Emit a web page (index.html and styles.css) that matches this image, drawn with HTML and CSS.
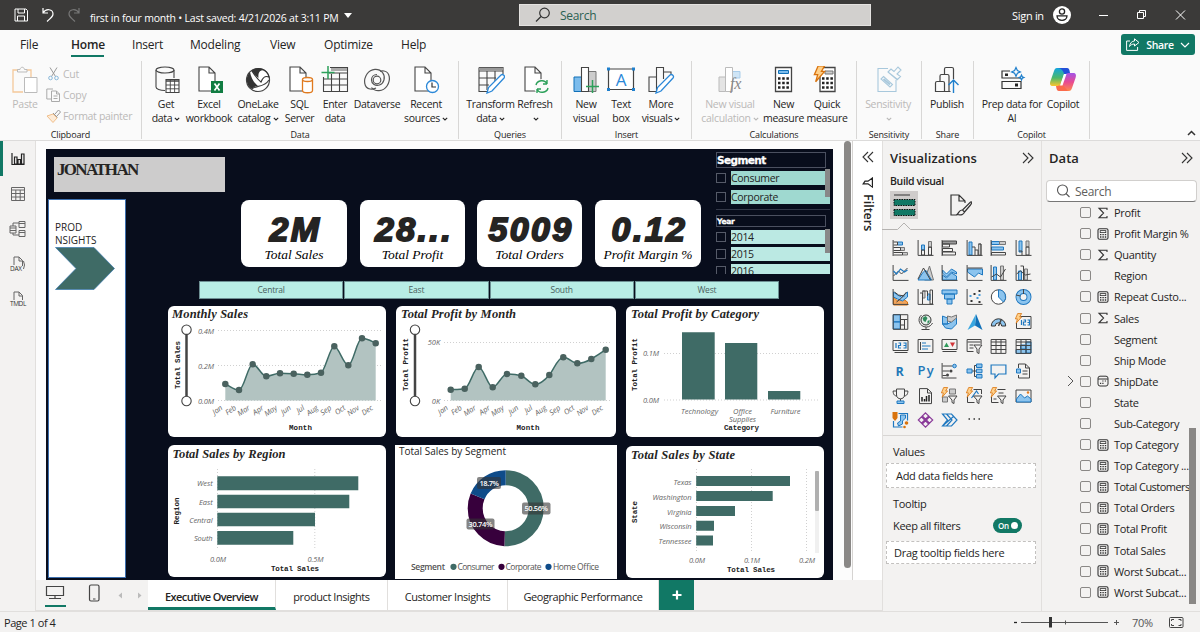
FILE: index.html
```
<!DOCTYPE html>
<html lang="en">

<head>
    <meta charset="UTF-8">
    <meta name="viewport" content="width=device-width, initial-scale=1.0">
    <title>first in four month</title>
    <link rel="stylesheet" href="styles.css">
</head>

<body>
    <!-- Shared icons -->
    <svg class="defs" width="0" height="0">
        <defs>
            <symbol id="calc" viewBox="0 0 12 12"><rect x="1" y=".7" width="10" height="10.6" rx="1.5" fill="none" stroke="#333" stroke-width="1.1"/><rect x="3.2" y="2.6" width="5.6" height="2" fill="none" stroke="#333" stroke-width=".8"/><path d="M3 6.7h1.4M5.4 6.7h1.4M7.8 6.7h1.4M3 9h1.4M5.4 9h1.4M7.8 9h1.4" stroke="#333" stroke-width="1.3"/></symbol>
            <symbol id="sigma" viewBox="0 0 12 12"><path d="M10 3V1.2H2L6.6 6 2 10.8h8V9" fill="none" stroke="#333" stroke-width="1.1"/></symbol>
            <symbol id="date" viewBox="0 0 12 12"><rect x="1" y="1.2" width="10" height="9.8" rx="2" fill="none" stroke="#333"/><path d="M1 4h10" stroke="#333"/><path d="M5.3 6h1.2M7.8 6H9M3 8.400h1.200M5.300 8.400h1.200" stroke="#333" stroke-width="1.2"/></symbol>
            <symbol id="dbl" viewBox="0 0 12 12"><path d="M1 1l5 5-5 5M6 1l5 5-5 5" fill="none" stroke="#333" stroke-width="1.1"/></symbol>
            <symbol id="down" viewBox="0 0 6 6"><path d="M.8 1.800L3 4l2.200-2.200" fill="none" stroke="currentColor" stroke-width="1.1"/></symbol>
            <symbol id="page" viewBox="0 0 28 28"><path d="M3 1h10l6 6v18H3zM13 1v6h6" fill="#fff" stroke="#444" stroke-width="1.1"/></symbol>
            <symbol id="bolt" viewBox="0 0 10 14"><path d="M4 .6h5L6.500 5H9L2 13l1.600-5.500H1z" fill="#ffd08a" stroke="#d9730d"/></symbol>
        </defs>
    </svg>

    <header class="titlebar">
        <svg class="tb-icons" width="70" height="16" viewBox="0 0 70 16" fill="none" stroke="#fff">
            <path d="M1 2h11l1.500 1.500V14H1zM4 2v4h6.500V2M3.500 14V9h7v5" />
            <path d="M29 1v5h5M29 6c3-5 10-4 10 1 0 2-1 3-6 7.500" stroke-width="1.200" />
            <path d="M65 1v5h-5M65 6c-3-5-10-4-10 1 0 2 1 3 6 7.500" stroke="#777" stroke-width="1.200" />
        </svg>
        <span class="file-name">first in four month • Last saved: 4/21/2026 at 3:11 PM</span>
        <span class="caret"></span>
        <div class="top-search">
            <svg width="16" height="16" viewBox="0 0 16 16" fill="none" stroke="#333" stroke-width="1.200"><circle cx="9.500" cy="6" r="4.800" /><path d="M6 9.500L1 14.500" /></svg>
            <span>Search</span>
        </div>
        <span class="sign-in">Sign in</span>
        <svg class="avatar" width="18" height="18" viewBox="0 0 18 18"><circle cx="9" cy="9" r="9" fill="#fff" /><circle cx="9" cy="5.500" r="2.600" fill="none" stroke="#222" stroke-width="1.300" /><path d="M4 9.800h10c0 6-10 6-10 0z" fill="none" stroke="#222" stroke-width="1.300" /></svg>
        <svg class="win-buttons" width="88" height="12" viewBox="0 0 88 12" fill="none" stroke="#fff"><path d="M0 6.500h9M38.500 3.500h6v6h-6zM40.500 3.500v-2h6v6h-2M77 1.500l9 9M86 1.500l-9 9" /></svg>
    </header>

    <nav class="menu">
        <a class="m-file">File</a>
        <a class="m-home active">Home</a>
        <a class="m-insert">Insert</a>
        <a class="m-modeling">Modeling</a>
        <a class="m-view">View</a>
        <a class="m-optimize">Optimize</a>
        <a class="m-help">Help</a>
        <button class="share">
            <svg width="14" height="13" viewBox="0 0 14 13" fill="none" stroke="#fff"><path d="M4 3H.6v9.400h11V9M8.500.8L13 4.500 8.500 8V6C6 6 4.500 7 3.500 8.500 4 5 6 3 8.500 3z" /></svg>
            Share
            <svg width="10" height="10" viewBox="0 0 10 10" fill="none" stroke="#fff" stroke-width="1.200"><path d="M1 3l4 4 4-4" /></svg>
        </button>
    </nav>

    <section class="ribbon">
        <div class="group g-clipboard">
            <div class="tools">
                <div class="tool t-paste off">
                    <svg width="28" height="28" viewBox="0 0 28 28" fill="none"><path d="M7 4H2v22h10M20 12V4h-4" stroke="#f5c99b" stroke-width="1.300" /><path d="M6.500 6V3.500H9c.5-3 4-3 4.500 0H16V6z" stroke="#bbb" /><path d="M13.500 11.500H26v15H13.500z" fill="#fff" stroke="#bbb" /></svg>
                    <span>Paste</span>
                </div>
                <div class="clip-list">
                    <div><svg width="15" height="14" viewBox="0 0 15 14" fill="none"><path d="M4 .5l5.500 9M11 .5L5.500 9.500" stroke="#999" /><circle cx="4.500" cy="11" r="1.800" stroke="#8ab8da" /><circle cx="10.500" cy="11" r="1.800" stroke="#8ab8da" /></svg>Cut</div>
                    <div><svg width="15" height="14" viewBox="0 0 15 14" fill="none" stroke="#aaa"><path d="M5 11H.8V1H7M5.500 3h5l3 3v7.500h-8zM10.500 3v3h3M7.500 8h4M7.500 10.500h4" /></svg>Copy</div>
                    <div><svg width="15" height="14" viewBox="0 0 15 14" fill="none"><path d="M1 7l6-2 4 4-4 4.500z" fill="#fdebd7" stroke="#f0bf8c" /><path d="M7 4l4.500 4.500M9 5l3.500-4 2 2L11 7" stroke="#999" /></svg>Format painter</div>
                </div>
            </div>
            <p>Clipboard</p>
        </div>

        <div class="group g-data">
            <div class="tools">
                <div class="tool w36">
                    <svg width="28" height="28" viewBox="0 0 28 28" fill="none" stroke="#444" stroke-width="1.100"><path d="M4 4v17c0 2 4 3.500 9 3.500M22 4v8" /><ellipse cx="13" cy="4" rx="9" ry="3" /><path d="M14 13.500h13v13H14z" fill="#fff" /><path d="M14 15h13" stroke-width="1.500" /><path d="M14 19h13M14 22.800h13M18.300 14v12M22.600 14v12" stroke-width=".9" /></svg>
                    <span>Get<br>data<svg class="dn"><use href="#down" /></svg></span>
                </div>
                <div class="tool w50">
                    <svg width="28" height="28" viewBox="0 0 28 28"><use href="#page" x="1" /><path d="M16 15h12v12H16z" fill="#107c41" /><path d="M19.500 17.500l5 7M24.500 17.500l-5 7" stroke="#fff" stroke-width="1.700" /></svg>
                    <span>Excel<br>workbook</span>
                </div>
                <div class="tool w48">
                    <svg width="28" height="28" viewBox="0 0 28 28"><circle cx="14" cy="14" r="11.500" fill="#fff" stroke="#444" stroke-width="1.200" /><path d="M8 5c6-5 15-2 17 6-4-1.500-6 0-8 5C13 13 10 8 8 5z" fill="#fff" stroke="#333" stroke-width="1.200" /><path d="M8 5c4-3.500 9-3 12-1-5 0-6 4-5.500 8C12 10 10 8 8 5zM6 6c-5 5-4 14 2 17 2-2 3-3 6-3-4-3-7-8-8-14z" fill="#333" /><path d="M8 23c4-4 12-1 17-9" fill="none" stroke="#444" stroke-width="1.200" /></svg>
                    <span>OneLake<br>catalog<svg class="dn"><use href="#down" /></svg></span>
                </div>
                <div class="tool w35">
                    <svg width="28" height="28" viewBox="0 0 28 28"><use href="#page" x="1" /><path d="M16.500 13.500v11c0 3 10 3 10 0v-11" fill="#fff" stroke="#e07a1f" stroke-width="1.300" /><ellipse cx="21.500" cy="13.500" rx="5" ry="2" fill="#fff" stroke="#e07a1f" stroke-width="1.300" /></svg>
                    <span>SQL<br>Server</span>
                </div>
                <div class="tool w36">
                    <svg width="28" height="28" viewBox="0 0 28 28" fill="none" stroke="#444" stroke-width="1.100"><path d="M2.500 11v14.500h24V1.500H9M26 7H8M26 13H3M26 19H3M10.500 8v17M18.500 7v18" /><path d="M10 3.500h16" stroke="#aaa" stroke-width="3" /><path d="M7 0v13M.5 6.500h13" stroke="#2ca05a" stroke-width="1.500" /></svg>
                    <span>Enter<br>data</span>
                </div>
                <div class="tool w48">
                    <svg width="28" height="28" viewBox="0 0 28 28" fill="none" stroke="#555" stroke-width="1.200"><circle cx="14" cy="14" r="3.800" /><path d="M7 23C1 22 0 14 4 8 8 2 16 2 19.500 6.500c3.500 4.500 1.500 11-3 12.500-4 1.300-8-1-8-5 0-3 2-5.500 5.500-5.500" /><path d="M21 5c6 1 7 9 3 15-4 6-12 6-15.500 1.500" /><path d="M7 23c3 .5 5-.5 6-1M21 5c-2-.3-3 0-4 .3" /></svg>
                    <span>Dataverse</span>
                </div>
                <div class="tool w50">
                    <svg width="28" height="28" viewBox="0 0 28 28"><use href="#page" /><circle cx="20.500" cy="20.500" r="6" fill="#fff" stroke="#2b88d8" stroke-width="1.300" /><path d="M20 16.500v4.500h4" fill="none" stroke="#333" stroke-width="1.200" /></svg>
                    <span>Recent<br>sources<svg class="dn"><use href="#down" /></svg></span>
                </div>
            </div>
            <p>Data</p>
        </div>

        <div class="group g-queries">
            <div class="tools">
                <div class="tool w53">
                    <svg width="28" height="28" viewBox="0 0 28 28" fill="none" stroke="#444" stroke-width="1.100"><path d="M2 1.500h24V8M2 1.500v24h8M2 5h24M2 12h17M2 19h10M10 5v19M18 5v10" /><path d="M2 3h24" stroke="#999" stroke-width="2.500" /><path d="M10 27l1.500-5.500L24 9c2-1.500 4.500 1 3 3L15 25z" fill="#fff" stroke="#2b88d8" stroke-width="1.300" /></svg>
                    <span>Transform<br>data<svg class="dn"><use href="#down" /></svg></span>
                </div>
                <div class="tool w36">
                    <svg width="28" height="28" viewBox="0 0 28 28"><use href="#page" x="1" /><circle cx="21" cy="21" r="8" fill="#fafafa" /><path d="M15 19c1-5 9-6 11-1v-4M26 18h-4M27 22c-1 5-9 6-11 1v4M16 23h4" fill="none" stroke="#2ca05a" stroke-width="1.400" /></svg>
                    <span>Refresh<br><svg class="dn"><use href="#down" /></svg></span>
                </div>
            </div>
            <p>Queries</p>
        </div>

        <div class="group g-insert">
            <div class="tools">
                <div class="tool w34">
                    <svg width="28" height="28" viewBox="0 0 28 28"><path d="M16 5.500h8v20h-8z" fill="#ccc" stroke="#777" /><path d="M2 11h7.500v14.500H2z" fill="#7cbcec" stroke="#1070b8" /><path d="M9.500 1.500h7v24h-7z" fill="#fff" stroke="#444" stroke-width="1.100" /><path d="M20.500 14v13M14 20.500h13" stroke="#2ca05a" stroke-width="1.500" /></svg>
                    <span>New<br>visual</span>
                </div>
                <div class="tool w36">
                    <svg width="28" height="28" viewBox="0 0 28 28"><path d="M1.500 3h25v20.500h-25z" fill="#fff" stroke="#444" stroke-width="1.200" /><path d="M0 1.500h3v3H0zM25 1.500h3v3h-3zM0 22h3v3H0zM25 22h3v3h-3z" fill="#1f7fcc" /><text x="14" y="19.500" font-size="17" text-anchor="middle" fill="#2b88d8">A</text></svg>
                    <span>Text<br>box</span>
                </div>
                <div class="tool w44">
                    <svg width="28" height="28" viewBox="0 0 28 28" fill="none" stroke="#444" stroke-width="1.100"><path d="M9 25.500H2V11h7M9.500 25V1.500h7V13M16.500 6H24v4" /><path d="M9 27l1.500-5.500L23 9c2-1.500 4.500 1 3 3L14 25z" fill="#fff" stroke="#2b88d8" stroke-width="1.300" /></svg>
                    <span>More<br>visuals<svg class="dn"><use href="#down" /></svg></span>
                </div>
            </div>
            <p>Insert</p>
        </div>

        <div class="group g-calc">
            <div class="tools">
                <div class="tool w60 off">
                    <svg width="28" height="28" viewBox="0 0 28 28"><path d="M3 11h6.500v14.500H3z" fill="#e4e4e4" stroke="#bbb" /><path d="M16 5.500h8V12h-8z" fill="#cfe5f6" stroke="#a9cdea" /><path d="M9.500 1.500h7v24h-7z" fill="#fff" stroke="#bbb" /><text class="fx" x="14" y="22.500" font-size="16" fill="#888">fx</text></svg>
                    <span>New visual<br>calculation<svg class="dn"><use href="#down" /></svg></span>
                </div>
                <div class="tool w47">
                    <svg width="28" height="28" viewBox="0 0 28 28"><path d="M5.500 1.500h16v24h-16z" fill="#fff" stroke="#444" stroke-width="1.300" /><path d="M8.500 4.500h10v3h-10z" fill="#7cbcec" stroke="#1070b8" /><path d="M8 12.500h11M8 17h11M8 21.500h11" stroke="#222" stroke-width="2.500" stroke-dasharray="2.500 1.700" /></svg>
                    <span>New<br>measure</span>
                </div>
                <div class="tool w40">
                    <svg width="28" height="28" viewBox="0 0 28 28"><path d="M7 1.500h15v24H7z" fill="#fff" stroke="#444" stroke-width="1.300" /><path d="M12 5h8v3h-8z" fill="#ccc" stroke="#777" /><path d="M9 12.500h11M9 17h11M9 21.500h11" stroke="#222" stroke-width="2.500" stroke-dasharray="2.500 1.700" /><use href="#bolt" x="0" y="-1" width="13" height="18" /></svg>
                    <span>Quick<br>measure</span>
                </div>
            </div>
            <p>Calculations</p>
        </div>

        <div class="group g-sens">
            <div class="tools">
                <div class="tool w50 off">
                    <svg width="28" height="28" viewBox="0 0 28 28" fill="none" stroke="#a8c8dc" stroke-width="1.100"><path d="M14 2.500H4v23h18V14M9.500 10.500l9 8-2.500 2.500-9-8z" /><path d="M9.500 13l6.500 5.500" stroke-width="2" /><path d="M14 6l3-3 3 2.500L24 1l3 3-4 4 3.500 2.500-3 3zM14 6l9.500 8" /></svg>
                    <span>Sensitivity<br><svg class="dn"><use href="#down" /></svg></span>
                </div>
            </div>
            <p>Sensitivity</p>
        </div>

        <div class="group g-share">
            <div class="tools">
                <div class="tool w44">
                    <svg width="28" height="28" viewBox="0 0 28 28" fill="none" stroke="#444" stroke-width="1.200"><path d="M4 15.500h6q1.500 0 1.500 1.500v8.500h-9V17q0-1.500 1.500-1.500zM11.500 25.500h6M7 15.500V10q0-1.500 1.500-1.500h6q1.500 0 1.500 1.500v15M11.500 8.500V3q0-1.500 1.500-1.500h6q1.500 0 1.500 1.500v10" /><path d="M20.500 27V14.500M15.500 19l5-5 5 5" stroke="#1f7fcc" stroke-width="1.400" /></svg>
                    <span>Publish</span>
                </div>
            </div>
            <p>Share</p>
        </div>

        <div class="group g-copilot">
            <div class="tools">
                <div class="tool w64">
                    <svg width="28" height="28" viewBox="0 0 28 28" fill="none" stroke="#333" stroke-width="1.200"><path d="M12 5H4v7h19M4 15.500h19v7H4z" /><path d="M7 7.500h3v2.500H7zM17 17.500h3v3h-3z" fill="#222" stroke="none" /><path d="M18 1.500l1.400 3 3 1.400-3 1.400-1.400 3-1.400-3-3-1.400 3-1.400zM23.500 9l.8 1.800 1.700.7-1.700.8-.8 1.700-.8-1.700-1.700-.8 1.700-.7z" stroke="#1f7fcc" /></svg>
                    <span>Prep data for<br>AI</span>
                </div>
                <div class="tool w38">
                    <svg width="28" height="28" viewBox="0 0 28 28">
                        <defs>
                            <linearGradient id="cpa" x1="0" y1="0" x2="0" y2="1"><stop offset="0" stop-color="#12a5e0" /><stop offset=".55" stop-color="#4cb86a" /><stop offset="1" stop-color="#ffc52e" /></linearGradient>
                            <linearGradient id="cpb" x1="0" y1="0" x2="0" y2="1"><stop offset="0" stop-color="#a255e8" /><stop offset=".5" stop-color="#e84a92" /><stop offset="1" stop-color="#ff8a4c" /></linearGradient>
                        </defs>
                        <path d="M8 2h9l-5 16c-.5 2-2 2-4 2H4c-3 0-3.500-2-2.500-5L5 5c.6-2 1.500-3 3-3z" fill="url(#cpa)" />
                        <path d="M20 25h-9l5-16c.5-2 2-2 4-2h4c3 0 3.500 2 2.500 5L23 22c-.6 2-1.500 3-3 3z" fill="url(#cpb)" />
                        <path d="M9 2h9c2 0 2.500 1.500 3 5-2.500 0-4 0-5 3L15 8c-1-4-3-5.500-6-6z" fill="#2350d8" />
                        <path d="M19 25h-9c-2 0-2.500-1.500-3-5 2.500 0 4 0 5-3z" fill="#fb6a4c" />
                        <path d="M15 8h2.500l-4 11.500H11z" fill="#fff" />
                    </svg>
                    <span>Copilot</span>
                </div>
            </div>
            <p>Copilot</p>
        </div>
        <svg class="collapse" width="9" height="6" viewBox="0 0 9 6" fill="none" stroke="#333" stroke-width="1.500"><path d="M1 5l3.500-3.500L8 5" /></svg>
    </section>

    <main class="workspace">
        <aside class="rail">
            <div class="rail-item active"><svg width="16" height="16" viewBox="0 0 16 16" fill="none" stroke="#222" stroke-width="1.200"><path d="M2 2v11.500h12.500M4.500 6H7v7H4.500zM8 8.500h2.500V13H8zM11.500 3H14v10h-2.500z" /></svg></div>
            <div class="rail-item"><svg width="16" height="16" viewBox="0 0 16 16" fill="none" stroke="#666"><path d="M1.500 1.500h13v13h-13zM1.500 4h13M1.500 7.500h13M1.500 11h13M5.800 4v10.500M10.200 4v10.500" /></svg></div>
            <div class="rail-item"><svg width="17" height="18" viewBox="0 0 17 18" fill="none" stroke="#666"><path d="M1 6h6v7H1zM1 8h6M1 10.500h6M10 1.500h6v6h-6zM10 3.500h6M10 10.500h6v6h-6zM10 12.500h6M4 6V3h6M4 13v2h6" /></svg></div>
            <div class="rail-item"><svg width="18" height="18" viewBox="0 0 18 18" fill="none" stroke="#666"><path d="M5 10V2h5l3.500 3.500V11M10 2v4h3.500M14.500 6q2 4 0 8" /><text x="1" y="16" font-size="6.500" stroke="none" fill="#333">DAX</text></svg></div>
            <div class="rail-item"><svg width="18" height="18" viewBox="0 0 18 18" fill="none" stroke="#666"><path d="M5 10V2h5l3.500 3.500V10M10 2v4h3.500" /><text x="1" y="16" font-size="6.500" textLength="16" stroke="none" fill="#333">TMDL</text></svg></div>
        </aside>

        <div class="center">
            <div class="stage">
                <div class="report">
                    <div class="name-box">JONATHAN</div>

                    <div class="side-panel">
                        <p>PROD<br>NSIGHTS</p>
                        <svg width="60" height="43" viewBox="0 0 60 43"><path d="M.5.5H39l20.500 21L39 42.500H.5l20.500-21z" fill="#3f6b66" stroke="#3a7ab0" stroke-width=".7" /></svg>
                    </div>

                    <div class="kpis">
                        <div class="kpi"><b>2M</b><i>Total Sales</i></div>
                        <div class="kpi k2"><b>28...</b><i>Total Profit</i></div>
                        <div class="kpi k3"><b>5009</b><i>Total Orders</i></div>
                        <div class="kpi k4"><b>0.12</b><i>Profit Margin %</i></div>
                    </div>

                    <div class="slicers">
                        <div class="slicer segment">
                            <h4>Segment</h4>
                            <div class="opt"><span class="box"></span><span class="val">Consumer</span></div>
                            <div class="opt"><span class="box"></span><span class="val">Corporate</span></div>
                            <span class="thumb"></span>
                        </div>
                        <div class="slicer year">
                            <h4>Year</h4>
                            <div class="opt"><span class="box"></span><span class="val">2014</span></div>
                            <div class="opt"><span class="box"></span><span class="val">2015</span></div>
                            <div class="opt"><span class="box"></span><span class="val">2016</span></div>
                            <span class="thumb"></span>
                        </div>
                    </div>

                    <div class="visuals">
                        <div class="regions"><span>Central</span><span>East</span><span>South</span><span>West</span></div>
                        <div class="cards">
                            <!-- Monthly Sales -->
                            <div class="card">
                                <svg width="218" height="131" viewBox="168 306 218 131">
                                    <text class="title" x="172" y="318" textLength="76">Monthly Sales</text>
                                    <path class="grid" d="M218 330.500h164M218 365.500h164M218 400.500h164" />
                                    <path class="area" d="M225.300 384C230 386 234 390 239 390S248 364.300 252.700 364.300 261.500 376.300 266.300 376.300 275 373.300 280 373.300 289 373.500 293.700 373.700 302 374.700 307.300 374.700 317 374 321 372.700 330 346.300 334.300 346.300 343.500 365.300 348.300 365.300 357 338.300 362 338.300 371 341 375.700 343.300V400.500H225.300z" />
                                    <path class="line" d="M225.300 384C230 386 234 390 239 390S248 364.300 252.700 364.300 261.500 376.300 266.300 376.300 275 373.300 280 373.300 289 373.500 293.700 373.700 302 374.700 307.300 374.700 317 374 321 372.700 330 346.300 334.300 346.300 343.500 365.300 348.300 365.300 357 338.300 362 338.300 371 341 375.700 343.300" />
                                    <path class="dots" d="M225.300 384h0M239 390h0M252.700 364.300h0M266.300 376.300h0M280 373.300h0M293.700 373.700h0M307.300 374.700h0M321 372.700h0M334.300 346.300h0M348.300 365.300h0M362 338.300h0M375.700 343.300h0" />
                                    <path class="zoom" d="M186.500 330v71" /><circle class="knob" cx="186.500" cy="329.700" r="4.700" /><circle class="knob" cx="186.500" cy="401" r="4.700" />
                                    <g class="tick end"><text x="214" y="333.500">0.4M</text><text x="214" y="368.500">0.2M</text><text x="214" y="403.500">0.0M</text></g>
                                    <g class="tick end">
                                        <text transform="translate(223 409) rotate(-35)">Jan</text><text transform="translate(236.700 409) rotate(-35)">Feb</text><text transform="translate(250.400 409) rotate(-35)">Mar</text><text transform="translate(264 409) rotate(-35)">Apr</text><text transform="translate(277.700 409) rotate(-35)">May</text><text transform="translate(291.400 409) rotate(-35)">Jun</text><text transform="translate(305 409) rotate(-35)">Jul</text><text transform="translate(318.700 409) rotate(-35)">Aug</text><text transform="translate(332 409) rotate(-35)">Sep</text><text transform="translate(346 409) rotate(-35)">Oct</text><text transform="translate(359.700 409) rotate(-35)">Nov</text><text transform="translate(373.400 409) rotate(-35)">Dec</text>
                                    </g>
                                    <text class="axis" x="289" y="430" textLength="23">Month</text>
                                    <text class="axis" transform="translate(180 389) rotate(-90)" textLength="48">Total Sales</text>
                                </svg>
                            </div>

                            <!-- Total Profit by Month -->
                            <div class="card">
                                <svg width="220" height="131" viewBox="396 306 220 131">
                                    <text class="title" x="401" y="318" textLength="115">Total Profit by Month</text>
                                    <path class="grid" d="M444 342.500h168M444 400.500h168" />
                                    <path class="area" d="M450.700 389.700C455 389.500 460 389.500 464.700 388.700S474 367 478.700 367 488 387.300 492.700 387.300 502 374 507 374 517 374.500 521.300 375.700 530 384.300 535.300 384.300 545 380 549.300 375 558 357.300 563.300 357.300 572.500 363.300 577.300 363.300 587 361.500 591.300 359 601 353 605.700 349.700V400.500H450.700z" />
                                    <path class="line" d="M450.700 389.700C455 389.500 460 389.500 464.700 388.700S474 367 478.700 367 488 387.300 492.700 387.300 502 374 507 374 517 374.500 521.300 375.700 530 384.300 535.300 384.300 545 380 549.300 375 558 357.300 563.300 357.300 572.500 363.300 577.300 363.300 587 361.500 591.300 359 601 353 605.700 349.700" />
                                    <path class="dots" d="M450.700 389.700h0M464.700 388.700h0M478.700 367h0M492.700 387.300h0M507 374h0M521.300 375.700h0M535.300 384.300h0M549.300 375h0M563.300 357.300h0M577.300 363.300h0M591.300 359h0M605.700 349.700h0" />
                                    <path class="zoom" d="M415 330v71" /><circle class="knob" cx="415" cy="329.700" r="4.700" /><circle class="knob" cx="415" cy="401" r="4.700" />
                                    <g class="tick end"><text x="440" y="345">50K</text><text x="440" y="403.500">0K</text></g>
                                    <g class="tick end">
                                        <text transform="translate(448.500 409) rotate(-35)">Jan</text><text transform="translate(462.500 409) rotate(-35)">Feb</text><text transform="translate(476.500 409) rotate(-35)">Mar</text><text transform="translate(490.500 409) rotate(-35)">Apr</text><text transform="translate(504.500 409) rotate(-35)">May</text><text transform="translate(519 409) rotate(-35)">Jun</text><text transform="translate(533 409) rotate(-35)">Jul</text><text transform="translate(547 409) rotate(-35)">Aug</text><text transform="translate(561 409) rotate(-35)">Sep</text><text transform="translate(575 409) rotate(-35)">Oct</text><text transform="translate(589 409) rotate(-35)">Nov</text><text transform="translate(603.500 409) rotate(-35)">Dec</text>
                                    </g>
                                    <text class="axis" x="516.500" y="430" textLength="23">Month</text>
                                    <text class="axis" transform="translate(408 391) rotate(-90)" textLength="53">Total Profit</text>
                                </svg>
                            </div>

                            <!-- Total Profit by Category -->
                            <div class="card">
                                <svg width="198" height="131" viewBox="626 306 198 131">
                                    <text class="title" x="631" y="318" textLength="128">Total Profit by Category</text>
                                    <path class="grid" d="M664 353.500h156M664 400h156" />
                                    <path class="bar" d="M682 332.300h32.700v67.200H682zM725 343h32.300v56.500H725zM768 391h32.300v8.500H768z" />
                                    <g class="tick end"><text x="659" y="356">0.1M</text><text x="659" y="402.500">0.0M</text></g>
                                    <g class="tick"><text x="681" y="414" textLength="37">Technology</text><text x="733" y="414" textLength="19">Office</text><text x="729" y="422" textLength="27">Supplies</text><text x="770.500" y="414" textLength="30">Furniture</text></g>
                                    <text class="axis" x="724" y="430" textLength="35">Category</text>
                                    <text class="axis" transform="translate(637 391) rotate(-90)" textLength="53">Total Profit</text>
                                </svg>
                            </div>

                            <!-- Total Sales by Region -->
                            <div class="card">
                                <svg width="218" height="132" viewBox="168 445 218 132">
                                    <text class="title" x="172.500" y="458" textLength="113">Total Sales by Region</text>
                                    <path class="grid" d="M217.500 469v80M314.800 469v80" />
                                    <path class="bar" d="M217.300 476.300h141v14h-141zM217.300 494.700h132v13.600h-132zM217.300 512.700H315v13.600h-97.700zM217.300 531h76v13.700h-76z" />
                                    <g class="tick end"><text x="212.500" y="486">West</text><text x="212.500" y="504.500">East</text><text x="212.500" y="522.500">Central</text><text x="212.500" y="540.500">South</text></g>
                                    <g class="tick"><text x="210" y="562">0.0M</text><text x="307.500" y="562">0.5M</text></g>
                                    <text class="axis" x="271" y="571" textLength="48">Total Sales</text>
                                    <text class="axis" transform="translate(179 524.500) rotate(-90)" textLength="27">Region</text>
                                </svg>
                            </div>

                            <!-- Total Sales by Segment -->
                            <div class="card square">
                                <svg width="222" height="134" viewBox="395 445 222 134">
                                    <text class="plain" x="399" y="454.500" textLength="107">Total Sales by Segment</text>
                                    <g transform="rotate(-90 505.700 508.200)" fill="none" stroke-width="15">
                                        <circle cx="505.700" cy="508.200" r="30.500" stroke="#3f6b66" pathLength="100" stroke-dasharray="50.560 100" />
                                        <circle cx="505.700" cy="508.200" r="30.500" stroke="#37003c" pathLength="100" stroke-dasharray="30.740 100" stroke-dashoffset="-50.560" />
                                        <circle cx="505.700" cy="508.200" r="30.500" stroke="#0f4c8a" pathLength="100" stroke-dasharray="18.700 100" stroke-dashoffset="-81.300" />
                                    </g>
                                    <g fill="#333" fill-opacity=".6"><rect x="522" y="502.500" width="28.500" height="12" rx="2" /><rect x="466.500" y="518.500" width="28" height="11" rx="2" /><rect x="477" y="477" width="24" height="12" rx="2" /></g>
                                    <g class="share-pct"><text x="524.500" y="511.200" textLength="23.500">50.56%</text><text x="468.500" y="526.700" textLength="24">30.74%</text><text x="479.500" y="485.700" textLength="19.500">18.7%</text></g>
                                    <circle cx="453.500" cy="566.800" r="3.100" fill="#3f6b66" /><circle cx="501.500" cy="566.800" r="3.100" fill="#37003c" /><circle cx="548.500" cy="566.800" r="3.100" fill="#0f4c8a" />
                                    <g class="legend"><text class="name" x="411" y="569.800" textLength="34">Segment</text><text x="457.500" y="569.800" textLength="37">Consumer</text><text x="505.500" y="569.800" textLength="36">Corporate</text><text x="553" y="569.800" textLength="46">Home Office</text></g>
                                </svg>
                            </div>

                            <!-- Total Sales by State -->
                            <div class="card">
                                <svg width="198" height="132" viewBox="626 446 198 132">
                                    <text class="title" x="631" y="459" textLength="104">Total Sales by State</text>
                                    <path class="grid" d="M696.500 469v83M751.500 469v83M806.500 469v83" />
                                    <path class="bar" d="M696.200 476H790v10h-93.800zM696.200 491h76.500v10h-76.500zM696.200 506H735v10h-38.800zM696.200 520.700H714v10h-17.800zM696.200 535.500H713v10h-16.800z" />
                                    <g class="tick end"><text x="691.500" y="484.500">Texas</text><text x="691.500" y="499.500" textLength="39">Washington</text><text x="691.500" y="514.500">Virginia</text><text x="691.500" y="529.200">Wisconsin</text><text x="691.500" y="544">Tennessee</text></g>
                                    <g class="tick"><text x="689" y="562.500">0.0M</text><text x="744" y="562.500">0.1M</text><text x="799" y="562.500">0.2M</text></g>
                                    <rect x="815" y="471" width="4" height="82" fill="#f0f0f0" /><rect x="815" y="471" width="4" height="40" rx="1" fill="#b0b0b0" />
                                    <text class="axis" x="727" y="572" textLength="48">Total Sales</text>
                                    <text class="axis" transform="translate(637 523) rotate(-90)" textLength="22">State</text>
                                </svg>
                            </div>
                        </div>
                    </div>
                </div>
                <div class="scrollbar"></div>
                <aside class="filters">
                    <svg class="flip" width="12" height="12"><use href="#dbl" /></svg>
                    <svg width="11" height="11" viewBox="0 0 11 11" fill="none" stroke="#222" stroke-width="1.200"><path d="M10.400 1v9L6 6.800H1.200L3 4.200h3z" /></svg>
                    <span>Filters</span>
                </aside>
            </div>

            <div class="tabs">
                <div class="devices">
                    <svg width="108" height="26" viewBox="0 0 108 26" fill="none" stroke="#444"><path d="M10.500 6.500h17v9h-17zM13 18.500h12M19 16v2" stroke-width="1.200" /><rect x="53.500" y="5" width="9.500" height="16" rx="1.500" stroke-width="1.200" /><path d="M57 19h2.500" /><path d="M86 12.500l-3.500 3 3.500 3z" fill="#bbb" stroke="none" /><path d="M102 12.500l3.500 3-3.500 3z" fill="#bbb" stroke="none" /></svg>
                    <span class="underline"></span>
                </div>
                <div class="tab t1 active">Executive Overview</div>
                <div class="tab t2">product Insights</div>
                <div class="tab t3">Customer Insights</div>
                <div class="tab t4">Geographic Performance</div>
                <div class="add"><svg width="10" height="10" viewBox="0 0 10 10"><path d="M5 .5v9M.5 5h9" stroke="#fff" stroke-width="2.200" /></svg></div>
            </div>
        </div>

        <aside class="viz">
            <div class="pane-head"><h2>Visualizations</h2><svg width="12" height="12"><use href="#dbl" /></svg></div>
            <h3>Build visual</h3>
            <div class="modes">
                <div class="mode active"><svg width="23" height="23" viewBox="0 0 23 23"><path d="M1 1h16" stroke="#333" /><path d="M1 5.500h21v6H1zM1 15.500h21v6H1z" fill="#117865" stroke="#111" stroke-dasharray="1.500 1" /></svg></div>
                <div class="mode"><svg width="23" height="23" viewBox="0 0 23 23" fill="none" stroke="#333" stroke-width="1.200"><path d="M8 21H2V1h8l6 6v2M10 1v6h6M21.500 8c2-.5 1.500 1 0 3l-6 7-2-2zM13 16c-3 0-3 3-5 4.500 4 1 7 0 7.500-2.500" /></svg></div>
            </div>
            <svg class="notch" width="159" height="8" viewBox="0 0 159 8" fill="none" stroke="#b5b3b1"><path d="M0 7.500h15.500l6.500-6.500 6.500 6.500H159" /></svg>

            <div class="icons">
                <svg viewBox="0 0 16 16"><path class="b" d="M5 2h5v3H5z" /><path class="g" d="M8 7.500h4v3H8zM10 12.500h5v2.500h-5z" /><path class="k" d="M.6 0v16M1 2h4v3H1M1 7.500h7v3H1M1 12.500h9v2.500H1" /></svg>
                <svg viewBox="0 0 16 16"><path class="k" d="M.6 0v15.400H16" /><path class="b" d="M4 5h3v5H4z" /><path class="g" d="M11 1.500h3v6h-3z" /><path class="k" d="M4 10h3v5H4zM11 7h3v8h-3z" /></svg>
                <svg viewBox="0 0 16 16"><path class="d" d="M1 1h14v3H1z" /><path class="k" d="M.6 0v16M1 1h14v3H1zM1 4h7v3H1zM1 8.500h10v3H1zM1 12h13v3H1z" /></svg>
                <svg viewBox="0 0 16 16"><path class="b" d="M2.500 2h3v13h-3z" /><path class="g" d="M12 4h2.500v11H12z" /><path class="k" d="M.6 0v15.400H16M5.500 7h3v8M8.500 10h3v5M12 4h2.500v11" /></svg>
                <svg viewBox="0 0 16 16"><path class="b" d="M1 1.500h8v3H1zM1 7h12v3H1z" /><path class="g" d="M9 1.500h6v3H9z" /><path class="k" d="M.6 0v16M1 12.500h14v2.500H1z" /></svg>
                <svg viewBox="0 0 16 16"><path class="b" d="M3.500 1h3v11h-3z" /><path class="g" d="M10.500 1h3v6h-3z" /><path class="k" d="M.6 0v15.400H16M3.500 11h3v4M10.500 7h3v8h-3z" /></svg>

                <svg viewBox="0 0 16 16"><path class="k" d="M.6 0v15.400H16M1 11l5-5 3 3 6-6" /><path class="s" d="M1 6l3 3 4-5 4 3 3-2" /></svg>
                <svg viewBox="0 0 16 16"><path class="g" d="M7 15l5-14 4 14z" /><path class="b" d="M.5 15L5 8l3-3 6 10z" /><path class="k" d="M.5 14L6 3l7 12" /></svg>
                <svg viewBox="0 0 16 16"><path class="b" d="M1 5l4 4 5-5 5 3v2l-5-2-5 5-4-4z" /><path class="b" d="M1 10l4 3 5-5 5 3v4H1z" /><path class="k" d="M.6 0v15.400H16" /></svg>
                <svg viewBox="0 0 16 16"><path class="b" d="M1 4h15v6l-4-2-4 4-7-5z" /><path class="k" d="M.6 0v15.400H16M1 3h15" /></svg>
                <svg viewBox="0 0 16 16"><path class="b" d="M3 2h3v13H3z" /><path class="g" d="M10 1h3v14h-3z" /><path class="k" d="M.6 0v15.400H16M1 12l5-3 4 3 5-8" /></svg>
                <svg viewBox="0 0 16 16"><path class="b" d="M3 6h3v9H3z" /><path class="g" d="M9 4h3v11H9z" /><path class="k" d="M.6 0v15.400H16M5 1h3v14M1 9l4-3 5 4 5-1" /></svg>

                <svg viewBox="0 0 16 16"><path class="o" d="M1 8l4 4 4-3 6 4v3H1z" /><path class="b" d="M1 3l4 3 4 2 6-5v5l-5 4-5-2-4-2z" /><path class="k" d="M.6 0v15.400H16M2 3l4 3 6 1M14 3l-5 6-5 4" /></svg>
                <svg viewBox="0 0 16 16"><path class="b" d="M10 5h2.500v6H10z" /><path class="g" d="M5 2h2.500v7H5z" /><path class="k" d="M.6 0v15.400H16M2.500 4H5v11M5 2h5v5M12.500 1H15v14h-2.500z" /></svg>
                <svg viewBox="0 0 16 16"><path class="b" d="M.5 1h15v4H.5zM3 5h10v5H3zM5.500 10h5v5h-5z" /></svg>
                <svg viewBox="0 0 16 16"><path class="k" d="M.6 0v15.400H16" /><path d="M12 1h2v2h-2zM4 11h2v2H4zM7 4h2v2H7zM12 12h2v2h-2z" fill="#333" /><path d="M3 6h2v2H3zM10 8h2v2h-2zM12 5h2v2h-2z" fill="#4a9bd9" /></svg>
                <svg viewBox="0 0 16 16"><circle cx="8" cy="8" r="7.200" fill="#fff" stroke="#444" /><path class="b" d="M8 .8a7.200 7.200 0 015 12.300L8 8z" /></svg>
                <svg viewBox="0 0 16 16"><circle cx="8" cy="8" r="5.500" fill="none" stroke="#1f78c0" stroke-width="5" /><circle cx="8" cy="8" r="5.500" fill="none" stroke="#8cc4ee" stroke-width="3.200" /><path class="k" d="M8 0v5M.5 6l4.500 1" /></svg>

                <svg viewBox="0 0 16 16"><path class="b" d="M.7.7h7v7h-7zM.7 8h7v7h-7z" /><path class="k" d="M.7.7h14.600v14.600H.7zM8 1v14M8 5.500h7M12 6v9M8 11h4" /></svg>
                <svg viewBox="0 0 16 16"><circle cx="8.500" cy="6" r="5" fill="#e6f0ea" stroke="#333" /><path d="M5 4l3-2 2 2-2 4-2-1zM10 7l2-1v2l-2 2z" fill="#2f8a5b" /><path class="k" d="M4 1C-1 5 2 13 9 13c3 0 5-2 6-4M8.500 13v2.500M4 15.500h8" /></svg>
                <svg viewBox="0 0 16 16"><path class="b" d="M1 2l5 2v6H1zM6 10l4-2 5-5v7l-5 5-6-1-3-4z" /><path class="g" d="M6 2l4 1 5-2v3l-5 4-4-1z" /></svg>
                <svg viewBox="0 0 16 16"><path d="M9.500 0L16 16 8.500 11.500z" fill="#1070b8" /><path d="M9.500 0L1 16l7.500-4.500z" fill="#38a6e0" /></svg>
                <svg viewBox="0 0 16 16"><path d="M.8 12a7.200 7.200 0 0114.400 0h-4a3.200 3.200 0 00-6.400 0z" fill="#8cc4ee" stroke="#333" /><path class="k" d="M8 12l3-7" stroke-width="1.500" /></svg>
                <svg viewBox="0 0 16 16"><path class="k" d="M5 2.500h10.500v12H1V9" /><path class="s" d="M6 6v5M8 6h2v2H8v3h2.500M12 6h2v5h-2M12 8.500h2" /><use href="#bolt" x="-1" y="-1" width="8" height="11" /></svg>

                <svg viewBox="0 0 16 16"><path class="k" d="M.5 2.500h15v10H.5zM2 14.500h13" /><path class="s" d="M3.500 5v5M6 5h2v2.500H6V10h2.500M11 5h2.500v5H11M11 7.500h2.500" /></svg>
                <svg viewBox="0 0 16 16"><path class="k" d="M.6 1.500h14.800v13H.6zM3 4v8" /><path class="s" d="M4.500 5h4M4.500 8H13M4.500 11h6" stroke-width="1.700" /></svg>
                <svg viewBox="0 0 16 16"><path class="k" d="M.5 1.500h15v10H.5zM1 13.500h14" /><path d="M2.500 9L5 4.500 7.500 9z" fill="#2f9a5b" /><path d="M8.500 4.500h5L11 9z" fill="#d13438" /></svg>
                <svg viewBox="0 0 16 16"><path class="k" d="M7 13.500H.6V1.500h14V6M1 4h13M3 7h4M3 10h4" /><path class="k" fill="#fff" d="M7.500 7h8l-3 4v4.500l-2-1V11z" /></svg>
                <svg viewBox="0 0 16 16"><path class="k" d="M.6 1.500h14.800v13.900H.6zM.6 4h15M.6 7.500h15M.6 11.500h15M5.500 2v13M10.500 2v13" /></svg>
                <svg viewBox="0 0 16 16"><path class="b" d="M10.500 4h5v11h-5zM.6 11.500h10v4H.6zM5 7h5v4H5z" /><path class="k" d="M.6 1.500h14.800v13.900H.6zM.6 4h15M.6 7.500h15M.6 11.500h15M5.500 2v13M10.500 2v13" /></svg>

                <svg viewBox="0 0 16 16"><text x="3" y="12.500" font-size="12.500" font-weight="bold" fill="#1f78b8" textLength="8">R</text></svg>
                <svg viewBox="0 0 16 16"><text x="0" y="12" font-size="13" font-weight="600" fill="#1f78b8" textLength="16">Py</text></svg>
                <svg viewBox="0 0 16 16"><path class="k" d="M.6 0v15.400M1 3h10M1 8h7M1 12.500h4M1 15h14" /><circle cx="13" cy="3" r="1.800" class="b" /><circle cx="9.500" cy="8" r="1.500" fill="#444" /><circle cx="6" cy="12" r="1.500" fill="#444" /></svg>
                <svg viewBox="0 0 16 16"><path class="k" d="M5 8h5M8 2.500v11M8 2.500h3M8 13.500h3" /><path class="b" d="M.5 6h5v4h-5zM10 1h5.500v3.500H10zM10 6.200h5.500v3.500H10zM10 11.500h5.500V15H10z" /></svg>
                <svg viewBox="0 0 16 16"><path class="s" fill="#fff" d="M.6 2h14.800v9H8l-3.500 4v-4H.6z" /></svg>
                <svg viewBox="0 0 16 16"><path class="k" d="M3 5V1h7l4 4v10H3v-3M10 1v4h4M7 8h5M7 11h5" /><path class="b" d="M1 6h4v4H1z" /></svg>

                <svg viewBox="0 0 16 16"><path class="k" d="M4 1h8v6c0 5-8 5-8 0zM4 3H.6c0 4 2 5 4 5M12 3h3.400c0 4-2 5-4 5M8 11v3" /><path class="b" d="M4.500 13h7v2.500h-7z" /></svg>
                <svg viewBox="0 0 16 16"><path class="k" d="M2 .6h8l4 4v11H2zM10 1v4h4" /><path d="M4.500 9v4.500M7 11v2.500M9 8v5.500M11.500 7v6.500" stroke="#222" stroke-width="1.500" /></svg>
                <svg viewBox="0 0 16 16"><path class="g" d="M8 1h6v5H8zM1 9h5v5H1z" /><path class="k" fill="#fff" d="M7 8h8.500l-3 4v3.500l-2-1V12z" /><use href="#bolt" x="-1" y="-1" width="8" height="11" /></svg>
                <svg viewBox="0 0 16 16"><path class="k" d="M7 1.500h8V6M1 9v5.500h7" /><path class="s" d="M5 10l5-7 2 3" /><path class="k" fill="#fff" d="M7 8h8.500l-3 4v3.500l-2-1V12z" /><use href="#bolt" x="-1" y="-1" width="8" height="11" /></svg>
                <svg viewBox="0 0 16 16"><path class="k" d="M7 1.500h8M8 5h5M1 9v5.500h7M3 11h3" /><path class="k" fill="#fff" d="M7 8h8.500l-3 4v3.500l-2-1V12z" /><use href="#bolt" x="-1" y="-1" width="8" height="11" /></svg>
                <svg viewBox="0 0 16 16"><path class="k" d="M.5 2h15v12H.5z" /><path class="b" d="M1 11l4-5 4 4 3-2 3.500 3v3H1z" /><circle cx="12.500" cy="4.500" r="1.200" fill="#e07a1f" /></svg>

                <svg viewBox="0 0 16 16"><path class="s" d="M6 1.500h9v7M1 9v6h9" /><path class="b" d="M8 3h5v3l-3 3v3l-4 2-1-3 3-2z" /><path d="M0 0h5v6l-2.500 3L0 6z" fill="#d9730d" /><circle cx="14" cy="11" r="1.800" fill="#d9730d" /><circle cx="12" cy="15" r="1.300" fill="#d9730d" /></svg>
                <svg viewBox="0 0 16 16"><path fill="none" stroke="#8a3a99" stroke-width="1.200" d="M8 .8l3.200 3.200L8 7.200 4.800 4zM8 8.800l3.200 3.200L8 15.200 4.800 12zM4 4.800L7.200 8 4 11.200.8 8zM12 4.800L15.200 8 12 11.200 8.800 8z" /></svg>
                <svg viewBox="0 0 16 16"><path class="s" d="M1 2h9l5.500 6-5.500 6H1l5-6zM5 2l5.500 6L5 14M1 14L12 4.500" /></svg>
                <svg viewBox="0 0 16 16"><path d="M2 7h1.500M7 7h1.500M12 7h1.500" stroke="#333" stroke-width="1.400" /></svg>
            </div>

            <div class="wells">
                <p class="lbl">Values</p>
                <div class="well">Add data fields here</div>
                <p class="lbl tip">Tooltip</p>
                <div class="keep"><span>Keep all filters</span><span class="toggle">On<i></i></span></div>
                <div class="well short">Drag tooltip fields here</div>
            </div>
        </aside>

        <aside class="data">
            <div class="pane-head"><h2>Data</h2><svg width="12" height="12"><use href="#dbl" /></svg></div>
            <div class="search"><svg width="14" height="14" viewBox="0 0 14 14" fill="none" stroke="#555" stroke-width="1.100"><circle cx="6.500" cy="6" r="5" /><path d="M10 9.500l3.500 3.500" /></svg>Search</div>
            <ul class="fields">
                <li><i></i><svg><use href="#sigma" /></svg>Profit</li>
                <li><i></i><svg><use href="#calc" /></svg>Profit Margin %</li>
                <li><i></i><svg><use href="#sigma" /></svg>Quantity</li>
                <li><i></i><svg></svg>Region</li>
                <li><i></i><svg><use href="#calc" /></svg>Repeat Custo...</li>
                <li><i></i><svg><use href="#sigma" /></svg>Sales</li>
                <li><i></i><svg></svg>Segment</li>
                <li><i></i><svg></svg>Ship Mode</li>
                <li class="open"><svg class="exp" viewBox="0 0 8 12" fill="none" stroke="#555"><path d="M1 1l5 5-5 5" /></svg><i></i><svg><use href="#date" /></svg>ShipDate</li>
                <li><i></i><svg></svg>State</li>
                <li><i></i><svg></svg>Sub-Category</li>
                <li><i></i><svg><use href="#calc" /></svg>Top Category</li>
                <li><i></i><svg><use href="#calc" /></svg>Top Category ...</li>
                <li class="wide"><i></i><svg><use href="#calc" /></svg>Total Customers</li>
                <li><i></i><svg><use href="#calc" /></svg>Total Orders</li>
                <li><i></i><svg><use href="#calc" /></svg>Total Profit</li>
                <li><i></i><svg><use href="#calc" /></svg>Total Sales</li>
                <li><i></i><svg><use href="#calc" /></svg>Worst Subcat...</li>
                <li><i></i><svg><use href="#calc" /></svg>Worst Subcat...</li>
            </ul>
            <span class="data-thumb"></span>
        </aside>
    </main>

    <footer class="status">
        <span>Page 1 of 4</span>
        <svg width="106" height="14" viewBox="0 0 106 14" fill="none" stroke="#555"><path d="M1 7.500h3" stroke="#222" stroke-width="1.300" /><path d="M8 7.500h87M52.500 5.500v4M101 7.500h5M103.500 5v5" /><path d="M37.500 2v10.500" stroke="#333" stroke-width="3" /></svg>
        <span class="zoom-level">70%</span>
        <svg class="fit" width="15" height="11" viewBox="0 0 15 11" fill="none" stroke="#444"><rect x=".5" y=".5" width="13.500" height="10" rx="1" /><path d="M2.500 4V2.500H5M9.500 2.500H12V4M12 7v1.500H9.500M5 8.500H2.500V7" /></svg>
    </footer>
</body>

</html>
```

FILE: styles.css
```
* {
    box-sizing: border-box;
    margin: 0;
    padding: 0;
}

body {
    width: 1200px;
    height: 632px;
    overflow: hidden;
    display: flex;
    flex-direction: column;
    background: #f3f2f1;
    color: #252423;
    font-family: "Open Sans", "Noto Sans", sans-serif;
    font-size: 11px;
    letter-spacing: -0.3px;
}

svg {
    display: block;
    flex: none;
}

.defs {
    position: absolute;
}

/* Title bar */
.titlebar {
    height: 30px;
    flex: none;
    display: flex;
    align-items: center;
    background: #3b3a39;
    color: #fff;
    padding-left: 14px;
}

.file-name {
    width: 250px;
    margin-left: 6px;
    padding-top: 6px;
    font-size: 10.5px;
    letter-spacing: -0.21px;
    white-space: nowrap;
}

.caret {
    margin-left: 4px;
    margin-right: 1px;
    border: 4px solid transparent;
    border-top: 5px solid #fff;
    border-bottom: 0;
}

.top-search {
    width: 352px;
    height: 22px;
    margin-left: 166px;
    padding-left: 15px;
    display: flex;
    align-items: center;
    gap: 9px;
    background: #d2d0ce;
    border: 1px solid #e4e2e0;
    color: #2b6152;
    font-size: 12px;
}

.sign-in {
    width: 34px;
    margin-left: 141px;
    white-space: nowrap;
}

.avatar {
    margin-left: 7px;
}

.win-buttons {
    margin-left: 28px;
}

/* Menu */
.menu {
    height: 31px;
    flex: none;
    display: flex;
    background: #fafafa;
    font-size: 12px;
    line-height: 29px;
    letter-spacing: -0.2px;
}

.menu a {
    height: 27px;
    white-space: nowrap;
}

.menu .m-file {
    width: 18px;
    margin-left: 20px;
}

.menu .m-home {
    width: 33px;
    margin-left: 33px;
}

.menu .m-insert {
    width: 30px;
    margin-left: 28px;
}

.menu .m-modeling {
    width: 52px;
    margin-left: 28px;
}

.menu .m-view {
    width: 26px;
    margin-left: 28px;
}

.menu .m-optimize {
    width: 49px;
    margin-left: 28px;
}

.menu .m-help {
    width: 25px;
    margin-left: 28px;
}

.menu .active {
    font-weight: 600;
    border-bottom: 2px solid #117865;
}

.share {
    width: 74px;
    height: 21px;
    margin: 4px 5px 0 auto;
    display: flex;
    align-items: center;
    justify-content: center;
    gap: 6px;
    border: 0;
    border-radius: 3px;
    background: #117865;
    color: #fff;
    font-family: inherit;
    font-size: 10.5px;
    font-weight: 600;
    letter-spacing: -0.3px;
}

/* Ribbon */
.ribbon {
    height: 80px;
    flex: none;
    display: flex;
    background: #fafafa;
    border-bottom: 1px solid #dcdbda;
}

.group {
    height: 78px;
    border-right: 1px solid #d8d7d6;
}

.group p {
    text-align: center;
    font-size: 9px;
    line-height: 12px;
    letter-spacing: -0.15px;
}

.tools {
    height: 68px;
    display: flex;
    padding-top: 5px;
}

.g-clipboard {
    width: 142px;
}

.g-clipboard .tools {
    padding-left: 9px;
}

.g-data {
    width: 317px;
}

.g-data .tools {
    padding-left: 6px;
}

.g-queries {
    width: 103px;
}

.g-queries .tools {
    padding-left: 5px;
}

.g-insert {
    width: 130px;
}

.g-insert .tools {
    padding-left: 7px;
}

.g-calc {
    width: 165px;
}

.g-calc .tools {
    padding-left: 8px;
}

.g-sens {
    width: 65px;
}

.g-sens .tools {
    padding-left: 6px;
}

.g-share {
    width: 52px;
}

.g-share .tools {
    padding-left: 3px;
}

.g-copilot {
    width: 116px;
}

.g-copilot .tools {
    padding-left: 6px;
}

.tool {
    display: flex;
    flex-direction: column;
    align-items: center;
    text-align: center;
    white-space: nowrap;
    font-size: 10.5px;
    line-height: 14px;
}

.tool > span {
    margin-top: 3px;
}

.tool .dn {
    display: inline-block;
    width: 6px;
    height: 6px;
    margin-left: 2px;
}

.off,
.clip-list {
    color: #bab9b8;
}

.t-paste {
    width: 32px;
}

.w34 { width: 34px; }
.w35 { width: 35px; }
.w36 { width: 36px; }
.w38 { width: 38px; }
.w40 { width: 40px; }
.w44 { width: 44px; }
.w47 { width: 47px; }
.w48 { width: 48px; }
.w50 { width: 50px; }
.w53 { width: 53px; }
.w60 { width: 60px; }
.w64 { width: 64px; }

.fx {
    font-family: "Liberation Serif", serif;
    font-style: italic;
}

.clip-list {
    margin-left: 5px;
    font-size: 10.5px;
}

.clip-list div {
    height: 21px;
    display: flex;
    align-items: center;
    gap: 2px;
    margin-top: -3px;
    margin-bottom: 3px;
    white-space: nowrap;
}

.collapse {
    margin: 69px 4px 0 auto;
}

/* Workspace */
.workspace {
    height: 470px;
    flex: none;
    display: flex;
}

.rail {
    width: 36px;
    border-right: 1px solid #e1dfdd;
}

.rail-item {
    height: 35.2px;
    display: flex;
    align-items: center;
    justify-content: center;
}

.rail-item.active {
    border-left: 3px solid #117865;
    padding-right: 3px;
}

.center {
    width: 846px;
    display: flex;
    flex-direction: column;
}

.stage {
    height: 439px;
    display: flex;
    background: #fcfcfc;
    padding: 8px 0 0 10px;
}

.report {
    width: 787px;
    height: 431px;
    display: grid;
    grid-template-columns: 122px 548px 117px;
    grid-template-rows: 51px 82px 298px;
    background: #080d1c;
}

.name-box {
    grid-column: 1 / 3;
    grid-row: 1;
    width: 171px;
    height: 35px;
    margin: 8px 0 0 8px;
    padding-left: 3px;
    background: #cdcccc;
    font: bold 17px/26px "Liberation Serif", serif;
    letter-spacing: -1.7px;
}

.side-panel {
    grid-column: 1;
    grid-row: 2 / 4;
    width: 78px;
    height: 379px;
    margin: -1px 0 0 2px;
    padding: 21px 0 0 6px;
    background: #fff;
    border: 1px solid #3d6fae;
}

.side-panel p {
    font-size: 10px;
    line-height: 12.5px;
    letter-spacing: 0;
    margin-bottom: 1px;
}

.kpis {
    grid-column: 2;
    grid-row: 2;
    display: flex;
    gap: 13px;
    padding-left: 73px;
}

.kpi {
    width: 106px;
    height: 67px;
    display: flex;
    flex-direction: column;
    align-items: center;
    background: #fff;
    border-radius: 8px;
    white-space: nowrap;
}

.k2,
.k3 {
    width: 105px;
}

.k3 {
    margin-left: -1px;
}

.kpi b {
    height: 45px;
    padding-left: 3px;
    font: italic bold 34px/58px "Liberation Sans", sans-serif;
    letter-spacing: 2.4px;
    -webkit-text-stroke: 1.8px #252423;
}

.kpi i {
    font: italic 13.5px/20px "Liberation Serif", serif;
    letter-spacing: 0;
    color: #000;
}

.slicers {
    grid-column: 3;
    grid-row: 1 / 3;
    padding-top: 3px;
}

.slicer {
    width: 114px;
    position: relative;
}

.slicer h4 {
    width: 110px;
    height: 16px;
    border: 1px solid #4b5060;
    color: #fff;
    font: bold 10.5px/15px "DejaVu Sans", sans-serif;
    letter-spacing: -0.6px;
    -webkit-text-stroke: 0.3px #fff;
}

.segment {
    height: 58px;
    border-bottom: 1px solid #333848;
}

.opt {
    display: flex;
    align-items: center;
    gap: 5px;
}

.box {
    width: 10px;
    height: 10px;
    border: 1px solid #555a68;
}

.val {
    width: 99px;
    height: 14px;
    font-size: 10.5px;
    line-height: 14px;
    background: #9fd9d0;
}

.segment .opt {
    margin-top: 3px;
    margin-bottom: 5px;
}

.year {
    height: 59px;
    margin-top: 5px;
    overflow: hidden;
}

.year h4 {
    height: 12px;
    font-size: 7.5px;
    line-height: 11px;
    letter-spacing: -0.3px;
    margin-bottom: 3px;
}

.year .opt {
    margin-bottom: 3px;
}

.year .val {
    background: #bbe9e3;
}

.thumb {
    position: absolute;
    right: 0;
    top: 17px;
    width: 5px;
    height: 28px;
    background: #888;
}

.year .thumb {
    top: 14px;
    height: 24px;
}

.visuals {
    grid-column: 1 / 4;
    grid-row: 3;
    padding-left: 122px;
    height: 298px;
}

.regions {
    width: 580px;
    height: 18px;
    margin: -1px 0 7px 31px;
    display: flex;
    gap: 1px;
}

.regions span {
    flex: 1;
    background: #b8ede5;
    border: 1px solid #6d8f93;
    color: #4a5f5e;
    font-size: 8.5px;
    line-height: 16px;
    text-align: center;
    letter-spacing: -0.2px;
}

.cards {
    display: grid;
    grid-template-columns: 218px 220px 198px;
    gap: 8px 10px;
    grid-template-rows: 131px 134px;
}

.card {
    height: 131px;
    background: #fff;
    border-radius: 6px;
    overflow: hidden;
}

.card:nth-child(n+4) {
    height: 132px;
}

.card:last-child {
    margin-top: 1px;
}

.card.square {
    width: 222px;
    height: 134px;
    margin-left: -1px;
    border-radius: 0;
}

/* Charts */
.card text {
    letter-spacing: 0;
}

.title {
    font: italic bold 12.5px "Liberation Serif", serif;
    fill: #252423;
}

.plain {
    font-size: 10px;
    fill: #252423;
}

.card .tick text {
    font-size: 7.5px;
    font-style: italic;
    letter-spacing: -0.1px;
    fill: #666;
}

.end {
    text-anchor: end;
}

.axis {
    font: bold 7.5px "Liberation Mono", monospace;
    fill: #222;
}

.grid {
    stroke: #d0d0d0;
    stroke-dasharray: 1 2;
    fill: none;
}

.bar {
    fill: #3f6b66;
}

.area {
    fill: #b2c3c1;
}

.line {
    fill: none;
    stroke: #3f6b66;
    stroke-width: 1.5;
}

.dots {
    stroke: #4a625f;
    stroke-width: 6.5;
    stroke-linecap: round;
}

.zoom {
    stroke: #444;
    stroke-width: 2.5;
}

.knob {
    fill: #fff;
    stroke: #444;
    stroke-width: 1.1;
}

.share-pct {
    font-size: 7.5px;
    font-weight: 600;
    fill: #fff;
}

.legend {
    font-size: 8.5px;
    fill: #555;
}

.legend .name {
    font-weight: 600;
}

.scrollbar {
    width: 7px;
    height: 427px;
    margin: -8px 0 0 11px;
    background: #8a8886;
    border-radius: 4px;
}

.filters {
    width: 30px;
    height: 439px;
    margin: -8px 0 0 1px;
    padding: 10px 0 0 9px;
    background: #fff;
    border-left: 1px solid #d6d4d2;
}

.flip {
    transform: scaleX(-1);
    margin-bottom: 14px;
}

.filters span {
    display: block;
    width: 10px;
    margin: 6px 0 0 1px;
    writing-mode: vertical-rl;
    font-size: 12.5px;
    line-height: 10px;
    font-weight: 600;
    letter-spacing: 0;
}

/* Page tabs */
.tabs {
    height: 31px;
    display: flex;
    border-bottom: 1px solid #e1dfdd;
}

.devices {
    width: 112px;
}

.underline {
    display: block;
    width: 21px;
    height: 2px;
    margin: -1px 0 0 9px;
    background: #117865;
}

.tab {
    background: #fff;
    border-right: 1px solid #e1dfdd;
    text-align: center;
    line-height: 33px;
    letter-spacing: -0.42px;
    white-space: nowrap;
}

.tab.active {
    font-weight: 600;
    border-bottom: 3px solid #117865;
    letter-spacing: -0.58px;
}

.t1 { width: 128px; }
.t2 { width: 112px; }
.t3 { width: 120px; }
.t4 { width: 151px; }

.add {
    width: 35px;
    display: flex;
    align-items: center;
    justify-content: center;
    background: #117865;
}

/* Side panes */
.viz,
.data {
    width: 159px;
    border-left: 1px solid #e1dfdd;
}

.pane-head {
    height: 33px;
    padding: 0 7px;
    display: flex;
    align-items: center;
    justify-content: space-between;
}

.pane-head h2 {
    font-size: 13px;
    font-weight: 600;
    letter-spacing: 0.05px;
}

.viz h3 {
    padding-left: 7px;
    font-size: 10.5px;
    font-weight: 600;
    line-height: 15px;
    letter-spacing: -0.35px;
}

.modes {
    display: flex;
    gap: 28px;
    padding: 2px 0 0 7px;
}

.mode {
    width: 28px;
    height: 28px;
    display: flex;
    align-items: center;
    justify-content: center;
}

.mode.active {
    background: #cfcccb;
}

.notch {
    margin: 3px 0 10px -1px;
}

.icons {
    display: grid;
    grid-template-columns: repeat(6, 16px);
    grid-auto-rows: 16px;
    gap: 8.6px;
    padding: 0 0 7px 9px;
    border-bottom: 1px solid #d8d6d4;
}

.icons svg {
    width: 17px;
    height: 16px;
    overflow: visible;
}

.k {
    fill: none;
    stroke: #444;
}

.b {
    fill: #8cc4ee;
    stroke: #1f78c0;
}

.g {
    fill: #ccc;
    stroke: #777;
}

.d {
    fill: #999;
}

.o {
    fill: #f3a55b;
    stroke: #d9730d;
}

.s {
    fill: none;
    stroke: #1f78c0;
    stroke-width: 1.2;
}

.wells {
    padding: 8px 4px 0 3px;
}

.lbl {
    padding-left: 7px;
    line-height: 15px;
}

.well {
    height: 25px;
    width: 150px;
    margin-top: 4px;
    padding-left: 9px;
    border: 1px dashed #c3c1bf;
    background: #fff;
    line-height: 24px;
}

.tip {
    margin-top: 8px;
}

.keep {
    height: 16px;
    margin: 6px 0 8px;
    padding: 0 15px 0 7px;
    display: flex;
    align-items: center;
    justify-content: space-between;
}

.toggle {
    width: 29px;
    height: 15px;
    display: flex;
    align-items: center;
    justify-content: space-between;
    padding: 0 4px 0 5px;
    border-radius: 8px;
    background: #117865;
    color: #fff;
    font-size: 8px;
    font-weight: 600;
}

.toggle i {
    width: 7px;
    height: 7px;
    border-radius: 50%;
    background: #fff;
}

.well.short {
    height: 23px;
    padding-left: 7px;
    line-height: 21px;
}

.data {
    position: relative;
}

.search {
    width: 151px;
    height: 22px;
    margin: 6px 0 0 4px;
    padding-left: 9px;
    display: flex;
    align-items: center;
    gap: 5px;
    background: #fff;
    border: 1px solid #d1cfcd;
    border-bottom-color: #777;
    border-radius: 4px;
    color: #605e5c;
    font-size: 12px;
}

.fields {
    height: 399px;
    list-style: none;
    overflow: hidden;
}

.fields li {
    height: 21.1px;
    padding-left: 38px;
    display: flex;
    align-items: center;
    white-space: nowrap;
}

.fields i {
    width: 11px;
    height: 11px;
    margin-right: 6px;
    border: 1px solid #8a8886;
    border-radius: 2px;
}

.fields svg {
    width: 12px;
    height: 12px;
    margin-right: 5px;
}

.fields .wide {
    letter-spacing: -0.55px;
}

.fields .open {
    padding-left: 25px;
}

.fields .exp {
    width: 8px;
    margin-right: 5px;
}

.data-thumb {
    position: absolute;
    right: 4px;
    top: 287px;
    width: 7px;
    height: 176px;
    background: #8a8886;
}

/* Status bar */
.status {
    height: 21px;
    display: flex;
    align-items: center;
    padding: 0 16px 0 4px;
    border-top: 1px solid #e1dfdd;
}

.status > span:first-child {
    width: 1010px;
    letter-spacing: -0.45px;
}

.zoom-level {
    width: 37px;
    margin-left: 13px;
    color: #555;
}
```
